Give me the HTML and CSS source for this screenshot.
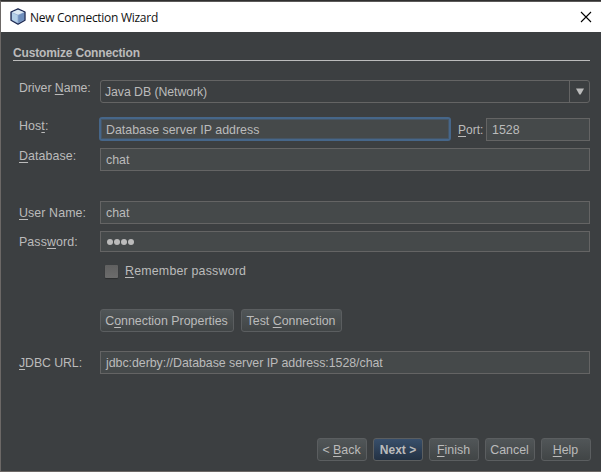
FILE: index.html
```html
<!DOCTYPE html>
<html lang="en">
<head>
<meta charset="utf-8">
<title>New Connection Wizard</title>
<link rel="stylesheet" href="styles.css">
</head>
<body>
<main class="window">
  <header class="titlebar">
    <svg class="logo" width="16" height="17" viewBox="0 0 16 17">
      <path d="M8 .8 15 4v8.2L8 16.2 1 12.2V4z" fill="#8fa8cf" stroke="#1c2850" stroke-width="1.3" stroke-linejoin="round"/>
      <path d="M8 1.8 14 4.3 8 6.800 2 4.300z" fill="#dce9f3"/>
      <path d="M2 4.800 7.600 7.200v7.600L2 11.700z" fill="#b4d0e8"/>
      <path d="M8.400 7.200 14 4.800v6.900l-5.600 3.100z" fill="#6f8fbd"/>
    </svg>
    <h1 class="title">New Connection Wizard</h1>
    <svg class="close" width="12" height="12" viewBox="0 0 12 12"><path d="M1 1l10 10M11 1L1 11" stroke="#000" stroke-width="1.1"/></svg>
  </header>
  <form class="panel">
    <h2 class="heading">Customize Connection</h2>
    <div class="row driver">
      <label class="label t1">Driver <u>N</u>ame:</label>
      <div class="combo"><span class="value t1">Java DB (Network)</span><span class="arrow"><svg width="8" height="7" viewBox="0 0 8 7"><path d="M0 .5h8L4.700 6.500H3.300z" fill="#bbb"/></svg></span></div>
    </div>
    <div class="row host">
      <label class="label t2">Hos<u>t</u>:</label>
      <div class="field focused t2">Database server IP address</div>
      <label class="port-label"><u>P</u>ort:</label>
      <div class="field port t2">1528</div>
    </div>
    <div class="row database">
      <label class="label t2"><u>D</u>atabase:</label>
      <div class="field t2">chat</div>
    </div>
    <div class="row user">
      <label class="label low t2"><u>U</u>ser Name:</label>
      <div class="field t2">chat</div>
    </div>
    <div class="row password">
      <label class="label mid t2">Pass<u>w</u>ord:</label>
      <div class="field secret"><i class="dot"></i><i class="dot"></i><i class="dot"></i><i class="dot"></i></div>
    </div>
    <div class="remember">
      <span class="checkbox"></span>
      <label class="t4"><u>R</u>emember password</label>
    </div>
    <div class="actions">
      <div class="button properties t2">C<u>o</u>nnection Properties</div>
      <div class="button test t2">Test <u>C</u>onnection</div>
    </div>
    <div class="row url">
      <label class="label low t1"><u>J</u>DBC URL:</label>
      <div class="field t3">jdbc:derby://Database server IP address:1528/chat</div>
    </div>
  </form>
  <footer class="footer">
    <div class="button t2">&lt; <u>B</u>ack</div>
    <div class="button primary">Next &gt;</div>
    <div class="button t2"><u>F</u>inish</div>
    <div class="button t2">Cancel</div>
    <div class="button t2"><u>H</u>elp</div>
  </footer>
</main>
</body>
</html>
```
FILE: styles.css
```css
* { box-sizing: border-box; }
body {
  margin: 0;
  background: #3c3f41;
  color: #bbb;
  font: 12px/14px "Liberation Sans", Arial, sans-serif;
  white-space: nowrap;
}
u { text-decoration: underline 1px; text-underline-offset: 2px; text-decoration-skip-ink: none; }

.window {
  display: flex;
  flex-direction: column;
  width: 601px;
  height: 472px;
  border-top: 1px solid #2f2f2f;
  border-left: 1px solid #6c6866;
  border-bottom: 1px solid #6c6866;
}
.titlebar {
  display: flex;
  align-items: center;
  height: 31px;
  padding: 0 9px;
  border-top: 1px solid #5c5a59;
  background: #fff;
}
.logo { margin-top: -1px; }
.title {
  flex: 1;
  margin: 1px 0 0 4px;
  color: #111;
  font: 12px/16px "Open Sans", "Noto Sans", sans-serif;
  letter-spacing: -0.28px;
}

.panel { padding: 14px 11px 0 12px; }
.heading {
  height: 15px;
  margin: 0 0 19px;
  border-bottom: 1px solid #bbb;
  font: bold 12px/14px "Liberation Sans", Arial, sans-serif;
  letter-spacing: -0.16px;
}
.t1 { font-size: 12.3px; letter-spacing: -0.06px; }
.t2 { font-size: 12.4px; letter-spacing: 0; }
.t3 { font-size: 12.4px; letter-spacing: -0.04px; }
.t4 { font-size: 12.4px; letter-spacing: 0.2px; }

.row { display: flex; height: 23px; padding-left: 6px; }
.label { width: 81px; flex: none; padding-top: 1px; }
.low { padding-top: 5px; }
.mid { padding-top: 4px; }
.label.t2 { letter-spacing: 0.1px; }
.host { margin-top: 15px; }
.database { margin-top: 7px; }
.user { margin-top: 30px; }
.password { height: 21px; margin-top: 7px; }
.url { margin-top: 19px; }

.combo { display: flex; flex: 1; border: 1px solid #646464; border-radius: 3px; }
.value { flex: 1; padding: 4px; }
.arrow {
  display: flex;
  align-items: center;
  justify-content: center;
  width: 20px;
  border-left: 1px solid #646464;
}
.field { flex: 1; padding: 4px 5px; border: 1px solid #646464; background: #45494a; }
.focused {
  flex: none;
  width: 352px;
  height: 24px;
  margin: -1px 0 0 -1px;
  padding: 4px 5px;
  border: 2px solid #466689;
  border-radius: 3px;
  box-shadow: inset 0 0 0 1px #455565;
}
.port-label { width: 28px; margin-left: 7px; padding-top: 5px; }
.secret { display: flex; align-items: center; gap: 1px; padding: 0 6px; }
.dot { width: 6px; height: 6px; border-radius: 50%; background: #bbb; }

.remember { display: flex; align-items: center; gap: 7px; height: 14px; margin: 12px 0 0 92px; }
.checkbox {
  width: 13px;
  height: 13px;
  border-radius: 1px;
  background: linear-gradient(#606060, #6c6c6c);
  box-shadow: 0 1px 1px #2c2e2f;
}
.actions { display: flex; gap: 7px; margin: 31px 0 0 87px; }
.button {
  width: 50px;
  height: 23px;
  padding: 4px 1px 0 0;
  border: 1px solid #5b5e60;
  border-radius: 3px;
  background: linear-gradient(#515658, #414546);
  text-align: center;
}
.properties { width: 134px; }
.test { width: 101px; }
.primary { padding-right: 0; background: linear-gradient(#384f6b, #233143); font-weight: bold; }
.footer { display: flex; justify-content: flex-end; gap: 6px; margin: auto 10px 10px 0; }
```
